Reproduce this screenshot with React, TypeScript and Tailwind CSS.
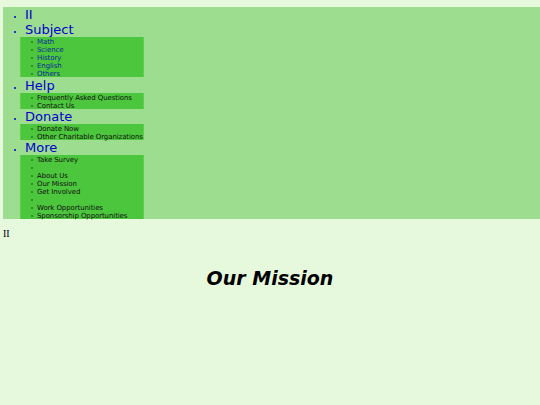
import React from "react";

const menu: { label: string; items?: string[]; blue?: boolean }[] = [
  { label: "II" },
  { label: "Subject", items: ["Math", "Science", "History", "English", "Others"], blue: true },
  { label: "Help", items: ["Frequently Asked Questions", "Contact Us"] },
  { label: "Donate", items: ["Donate Now", "Other Charitable Organizations"] },
  {
    label: "More",
    items: ["Take Survey", "", "About Us", "Our Mission", "Get Involved", "", "Work Opportunities", "Sponsorship Opportunities"],
  },
];

export default function App() {
  return (
    <div className="min-h-[405px] w-[540px] bg-[#e6f9dc] pt-[7px] font-['DejaVu_Sans',Verdana,sans-serif]">
      <nav className="ml-[3px] bg-[#9cdd90]">
        <ul className="list-disc pl-[22px] marker:text-[7px]">
          {menu.map((m) => (
            <li
              key={m.label}
              className={`text-[13px] leading-[15px] text-[#0000cc] ${m.label === "Help" ? "mt-[1px]" : ""}`}
            >
              <span>{m.label}</span>
              {m.items && (
                <ul className="ml-[-5px] w-[124px] border-x border-[#5fcf52] bg-[#4cc63d] pl-[10px]">
                  {m.items.map((s, i) => (
                    <li
                      key={i}
                      className={`flex h-[8px] items-center gap-[4px] whitespace-nowrap pt-[1px] text-[7px] leading-[8px] tracking-[-0.1px] ${m.blue ? "text-[#0a2a9a]" : "text-[#111111]"}`}
                    >
                      <span className="h-[2px] w-[2px] shrink-0 rounded-full bg-[#2f7a28]" />
                      <span>{s}</span>
                    </li>
                  ))}
                </ul>
              )}
            </li>
          ))}
        </ul>
      </nav>
      <p className="mt-[9px] pl-[3px] font-['Liberation_Serif',serif] text-[10px] leading-[12px] text-black">II</p>
      <h1 className="mt-[27px] text-center text-[19px] font-bold italic leading-[22px] text-black">Our Mission</h1>
    </div>
  );
}
